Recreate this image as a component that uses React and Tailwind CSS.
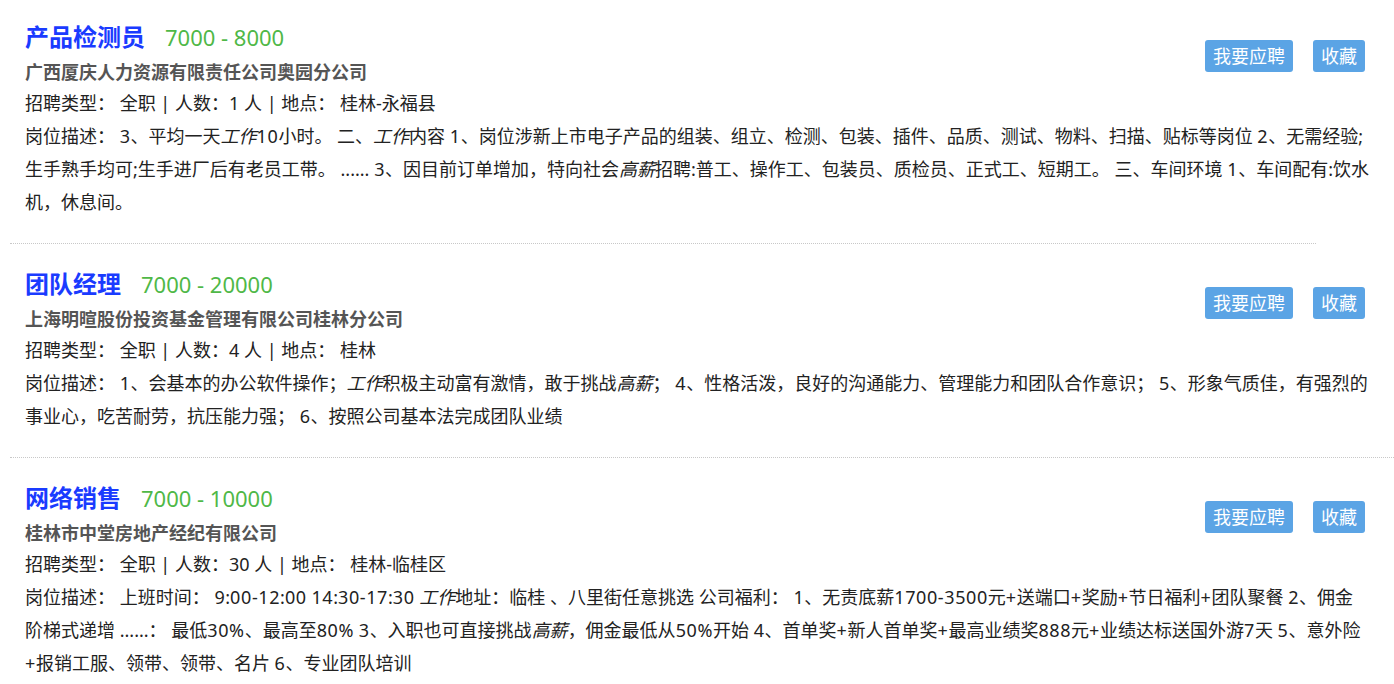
import React from "react";

const jobs = [
  {
    title: "产品检测员",
    salary: "7000 - 8000",
    company: "广西厦庆人力资源有限责任公司奥园分公司",
    count: "1",
    place: "桂林-永福县",
    desc: "3、平均一天*工作*10小时。 二、*工作*内容 1、岗位涉新上市电子产品的组装、组立、检测、包装、插件、品质、测试、物料、扫描、贴标等岗位 2、无需经验;生手熟手均可;生手进厂后有老员工带。 ...... 3、因目前订单增加，特向社会*高薪*招聘:普工、操作工、包装员、质检员、正式工、短期工。 三、车间环境 1、车间配有:饮水机，休息间。",
  },
  {
    title: "团队经理",
    salary: "7000 - 20000",
    company: "上海明暄股份投资基金管理有限公司桂林分公司",
    count: "4",
    place: "桂林",
    desc: "1、会基本的办公软件操作；*工作*积极主动富有激情，敢于挑战*高薪*； 4、性格活泼，良好的沟通能力、管理能力和团队合作意识； 5、形象气质佳，有强烈的事业心，吃苦耐劳，抗压能力强； 6、按照公司基本法完成团队业绩",
  },
  {
    title: "网络销售",
    salary: "7000 - 10000",
    company: "桂林市中堂房地产经纪有限公司",
    count: "30",
    place: "桂林-临桂区",
    desc: "上班时间： 9:00-12:00 14:30-17:30 *工作*地址：临桂 、八里街任意挑选 公司福利： 1、无责底薪1700-3500元+送端口+奖励+节日福利+团队聚餐 2、佣金阶梯式递增 ......： 最低30%、最高至80% 3、入职也可直接挑战*高薪*，佣金最低从50%开始 4、首单奖+新人首单奖+最高业绩奖888元+业绩达标送国外游7天 5、意外险+报销工服、领带、领带、名片 6、专业团队培训",
  },
];

// digits are set a touch wider, like the original page's font
function Latin({ text }) {
  return text.split(/([0-9%+\-]+)/).map((part, i) =>
    i % 2 ? <span key={i} className="tracking-[0.6px]">{part}</span> : part
  );
}

// *word* marks a highlighted keyword
function Desc({ text }) {
  return text.split(/(\*[^*]+\*)/).map((part, i) =>
    part.startsWith("*") ? <em key={i}>{part.slice(1, -1)}</em> : <Latin key={i} text={part} />
  );
}

function JobItem({ job, first }) {
  return (
    <div className={`ml-[10px] mr-[10px] px-[15px] pb-[24px] ${first ? "pt-[19px]" : "pt-[22px]"}`}>
      <div className="flex items-start justify-between">
        <div>
          <div className="flex items-baseline leading-[36px]">
            <span className="text-[24px] font-bold text-[#1a3bff]">{job.title}</span>
            <span className="ml-[20px] text-[22px] text-[#4fb847]">{job.salary}</span>
          </div>
          <div className="mt-[2px] text-[18px] font-bold leading-[30px] text-[#555]">{job.company}</div>
          <div className="text-[18px] leading-[33px] text-[#222]">
            招聘类型： 全职 | 人数：{job.count} 人 | 地点： {job.place}
          </div>
        </div>
        <div className="mr-[4px] mt-[21px] flex gap-[20px]">
          <button type="button" className="h-[32px] rounded-[3px] bg-[#5ba4e5] px-[8px] text-[18px] leading-[32px] text-white">
            我要应聘
          </button>
          <button type="button" className="h-[32px] rounded-[3px] bg-[#5ba4e5] px-[8px] text-[18px] leading-[32px] text-white">
            收藏
          </button>
        </div>
      </div>
      <p className="text-[18px] leading-[33px] text-[#222]">
        岗位描述： <Desc text={job.desc} />
      </p>
    </div>
  );
}

export default function App() {
  return (
    <div className="min-h-screen w-[1394px] bg-white font-['Noto_Sans','Noto_Sans_CJK_SC',sans-serif]">
      <JobItem job={jobs[0]} first />
      <div className="ml-[10px] mr-[78px] border-b border-dotted border-[#c8c8c8]" />
      <JobItem job={jobs[1]} />
      <div className="ml-[10px] border-b border-dotted border-[#c8c8c8]" />
      <JobItem job={jobs[2]} />
    </div>
  );
}
